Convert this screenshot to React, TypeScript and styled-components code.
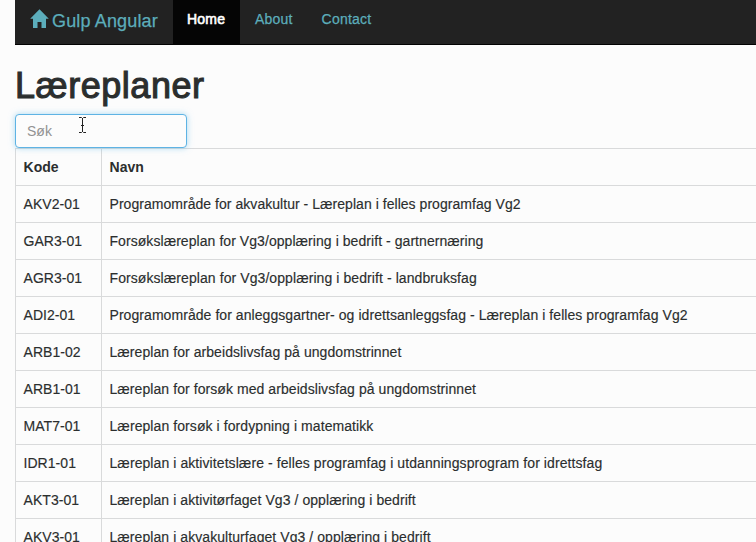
import React from "react";
import styled, { createGlobalStyle } from "styled-components";

const GlobalStyle = createGlobalStyle`
  * { box-sizing: border-box; }
  html, body { margin: 0; height: 542px; overflow: hidden; background: #fcfcfc; }
  body {
    font-family: "Liberation Sans", Arial, sans-serif;
    font-size: 14px;
    line-height: 20px;
    color: #2b2e2e;
  }
`;

const Page = styled.div`
  height: 542px;
  padding-left: 15px;
  overflow: hidden;
`;

const Navbar = styled.nav`
  display: flex;
  height: 45px;
  background: #222;
  border-bottom: 1px solid #030303;
`;

const Brand = styled.a`
  display: flex;
  align-items: flex-start;
  width: 158px;
  padding: 9px 0 0 15px;
  color: #5cadbb;
  font-size: 18px;
  line-height: 25px;
  letter-spacing: 0.15px;
  white-space: nowrap;
  -webkit-text-stroke: 0.25px currentColor;
`;

const HomeIcon = styled.svg`
  width: 19px;
  height: 19px;
  margin-right: 3px;
  fill: currentColor;
  flex: none;
`;

const NavLink = styled.a<{ $active?: boolean }>`
  height: 44px;
  padding: 9px ${(p) => (p.$active ? 15 : 14)}px 0 ${(p) => (p.$active ? 14 : 15)}px;
  width: ${(p) => (p.$active ? "67px" : "auto")};
  color: ${(p) => (p.$active ? "#fff" : "#5cadbb")};
  background: ${(p) => (p.$active ? "#050505" : "transparent")};
  letter-spacing: 0.2px;
  -webkit-text-stroke: ${(p) => (p.$active ? "0.6px" : "0.25px")} currentColor;
`;

const Title = styled.h1`
  margin: 21px 0 8px;
  font-size: 36px;
  font-weight: 400;
  line-height: 40px;
  letter-spacing: 0.55px;
  -webkit-text-stroke: 1.1px currentColor;
`;

const SearchField = styled.div`
  position: relative;
  width: 172px;
`;

const SearchInput = styled.input`
  display: block;
  width: 172px;
  height: 34px;
  padding: 6px 11px;
  border: 1px solid #5eb3e4;
  border-radius: 4px;
  outline: none;
  background: #fcfcfc;
  box-shadow: 0 0 6px rgba(102, 190, 233, 0.55);
  font: inherit;
  color: #555;
  &::placeholder { color: #929292; opacity: 1; }
`;

const TextCursor = styled.svg`
  position: absolute;
  left: 64px;
  top: 3px;
  width: 7px;
  height: 16px;
`;

const Table = styled.div`
  width: 760px;
  border: 1px solid #d9dadb;
  border-bottom: 0;
`;

const Row = styled.div<{ $head?: boolean }>`
  display: grid;
  grid-template-columns: 85px 1fr;
  height: 37px;
  border-bottom: 1px solid #d9dadb;
  font-weight: ${(p) => (p.$head ? 700 : 400)};
  -webkit-text-stroke: ${(p) => (p.$head ? "0" : "0.15px")} currentColor;
`;

const Cell = styled.div<{ $spacing?: number }>`
  padding: 8px 7.5px;
  white-space: nowrap;
  letter-spacing: ${(p) => p.$spacing ?? 0.05}px;
  & + & { border-left: 1px solid #d9dadb; }
`;

const plans = [
  { code: "AKV2-01", spacing: 0.04, name: "Programområde for akvakultur - Læreplan i felles programfag Vg2" },
  { code: "GAR3-01", spacing: 0.06, name: "Forsøkslæreplan for Vg3/opplæring i bedrift - gartnernæring" },
  { code: "AGR3-01", spacing: 0.08, name: "Forsøkslæreplan for Vg3/opplæring i bedrift - landbruksfag" },
  { code: "ADI2-01", spacing: 0.06, name: "Programområde for anleggsgartner- og idrettsanleggsfag - Læreplan i felles programfag Vg2" },
  { code: "ARB1-02", spacing: 0.07, name: "Læreplan for arbeidslivsfag på ungdomstrinnet" },
  { code: "ARB1-01", spacing: 0.07, name: "Læreplan for forsøk med arbeidslivsfag på ungdomstrinnet" },
  { code: "MAT7-01", spacing: 0.08, name: "Læreplan forsøk i fordypning i matematikk" },
  { code: "IDR1-01", spacing: 0.08, name: "Læreplan i aktivitetslære - felles programfag i utdanningsprogram for idrettsfag" },
  { code: "AKT3-01", spacing: 0.07, name: "Læreplan i aktivitørfaget Vg3 / opplæring i bedrift" },
  { code: "AKV3-01", spacing: 0.07, name: "Læreplan i akvakulturfaget Vg3 / opplæring i bedrift" },
];

export default function App() {
  return (
    <>
      <GlobalStyle />
      <Page>
        <Navbar>
          <Brand>
            <HomeIcon viewBox="0 0 19 19">
              <path d="M9.5 0.3 18.8 9.7H16V19h-4.5v-6h-4v6H3V9.700H.2z" />
            </HomeIcon>
            Gulp Angular
          </Brand>
          <NavLink $active>Home</NavLink>
          <NavLink>About</NavLink>
          <NavLink>Contact</NavLink>
        </Navbar>
        <Title>Læreplaner</Title>
        <SearchField>
          <SearchInput placeholder="Søk" />
          <TextCursor viewBox="0 0 7 16">
            <path d="M0 .5h2.5l1 1 1-1H7M3.5 1v14M0 15.5h2.5l1-1 1 1H7M2 8.5h3" fill="none" stroke="#222" />
          </TextCursor>
        </SearchField>
        <Table>
          <Row $head>
            <Cell>Kode</Cell>
            <Cell>Navn</Cell>
          </Row>
          {plans.map((plan) => (
            <Row key={plan.code}>
              <Cell>{plan.code}</Cell>
              <Cell $spacing={plan.spacing}>{plan.name}</Cell>
            </Row>
          ))}
        </Table>
      </Page>
    </>
  );
}
